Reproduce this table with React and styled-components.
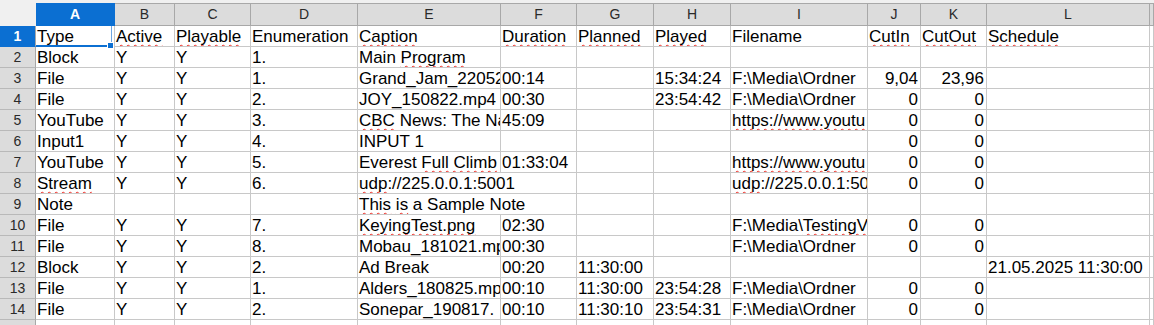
import React from 'react';
import styled, { createGlobalStyle, css } from 'styled-components';

// sheet geometry (px) – row header + columns A..L, then the rest
const COLS = [
  ['A', 79], ['B', 60], ['C', 76], ['D', 107], ['E', 143], ['F', 76],
  ['G', 77], ['H', 77], ['I', 137], ['J', 53], ['K', 66], ['L', 163],
];
const TEMPLATE = `36px ${COLS.map(c => c[1] + 'px').join(' ')} 1fr`;

const BLUE = '#0b6fd2';
const GRID = '#c8c8c8';
const HEAD_BG = '#dcdcdc';
const HEAD_LINE = '#a8a8a8';

const GlobalStyle = createGlobalStyle`
  html, body {
    margin: 0;
    background: #fff;
    overflow: hidden;
  }
`;

const Sheet = styled.div`
  width: 1154px;
  height: 325px;
  overflow: hidden;
  background: #fff;
  font-family: "Liberation Sans", Arial, sans-serif;
`;

const Row = styled.div`
  display: grid;
  grid-template-columns: ${TEMPLATE};
`;

const HeadRow = styled(Row)`
  background: #f0f0f0;
  height: 26px;
`;

const Corner = styled.div`
  background: #f0f0f0;
`;

const ColHead = styled.div`
  margin-top: 3px;
  height: 23px;
  box-sizing: border-box;
  border-top: 1px solid ${HEAD_LINE};
  border-right: 1px solid ${HEAD_LINE};
  border-bottom: 1px solid ${HEAD_LINE};
  background: ${HEAD_BG};
  color: #2a2a2a;
  font-size: 14px;
  line-height: 21px;
  text-align: center;
  ${p => p.$active && css`
    background: ${BLUE};
    border-color: ${BLUE};
    color: #fff;
    font-weight: bold;
  `}
`;

const RowHead = styled.div`
  height: 21px;
  box-sizing: border-box;
  border-right: 1px solid ${HEAD_LINE};
  border-bottom: 1px solid #b9b9b9;
  background: ${HEAD_BG};
  color: #2a2a2a;
  font-size: 14px;
  line-height: 20px;
  text-align: center;
  ${p => p.$active && css`
    background: ${BLUE};
    border-bottom-color: ${BLUE};
    color: #fff;
    font-weight: bold;
  `}
`;

const Cell = styled.div`
  position: relative;
  height: 21px;
  box-sizing: border-box;
  border-right: 1px solid ${GRID};
  border-bottom: 1px solid ${GRID};
  padding: 0 2px 0 1px;
  color: #000;
  font-size: 17px;
  line-height: 21px;
  white-space: nowrap;
  overflow: hidden;
  text-align: ${p => p.$align};
  grid-column: span ${p => p.$span};
  ${p => p.$active && css`
    overflow: visible;
    z-index: 2;
  `}
`;

const Cursor = styled.div`
  position: absolute;
  left: 0;
  top: 0;
  right: 2px;
  bottom: -1px;
  border-right: 1px solid #6ea6e3;
  border-bottom: 2px solid ${BLUE};
  pointer-events: none;
`;

const Handle = styled.div`
  position: absolute;
  right: -3px;
  bottom: -4px;
  width: 5px;
  height: 5px;
  background: ${BLUE};
  border: 1px solid #fff;
`;

// spell-check squiggle
const Spell = styled.span`
  text-decoration: underline wavy #ee2a22;
  text-decoration-thickness: 1.4px;
  text-underline-offset: 2px;
  text-decoration-skip-ink: none;
`;

const S = t => <Spell>{t}</Spell>;
const R = t => ({ t, align: 'right' });
const W = (t, span) => ({ t, span });

const DATA = [
  ['Type', S('Active'), S('Playable'), 'Enumeration', S('Caption'), S('Duration'), S('Planned'), S('Played'), 'Filename', S('CutIn'), S('CutOut'), S('Schedule')],
  ['Block', 'Y', 'Y', '1.', <>Main {S('Program')}</>],
  ['File', 'Y', 'Y', '1.', 'Grand_Jam_220522.mp4', '00:14', '', '15:34:24', 'F:\\Media\\Ordner', R('9,04'), R('23,96')],
  ['File', 'Y', 'Y', '2.', 'JOY_150822.mp4', '00:30', '', '23:54:42', 'F:\\Media\\Ordner', R('0'), R('0')],
  ['YouTube', 'Y', 'Y', '3.', <>{S('CBC')} News: The National</>, '45:09', '', '', S('https://www.youtu'), R('0'), R('0')],
  ['Input1', 'Y', 'Y', '4.', 'INPUT 1', '', '', '', '', R('0'), R('0')],
  ['YouTube', 'Y', 'Y', '5.', <>Everest {S('Full Climb')}</>, '01:33:04', '', '', S('https://www.youtu'), R('0'), R('0')],
  [S('Stream'), 'Y', 'Y', '6.', W(<>{S('udp')}://225.0.0.1:5001</>, 2), '', '', <>{S('udp')}://225.0.0.1:5001</>, R('0'), R('0')],
  ['Note', '', '', '', W(<>{S('This')} {S('is')} a Sample Note</>, 2)],
  ['File', 'Y', 'Y', '7.', S('KeyingTest.png'), '02:30', '', '', <>F:\Media\{S('TestingVideos')}</>, R('0'), R('0')],
  ['File', 'Y', 'Y', '8.', 'Mobau_181021.mp4', '00:30', '', '', 'F:\\Media\\Ordner', R('0'), R('0')],
  ['Block', 'Y', 'Y', '2.', 'Ad Break', '00:20', '11:30:00', '', '', '', '', '21.05.2025 11:30:00'],
  ['File', 'Y', 'Y', '1.', 'Alders_180825.mp4', '00:10', '11:30:00', '23:54:28', 'F:\\Media\\Ordner', R('0'), R('0')],
  ['File', 'Y', 'Y', '2.', 'Sonepar_190817.', '00:10', '11:30:10', '23:54:31', 'F:\\Media\\Ordner', R('0'), R('0')],
  [],
];

const norm = v => {
  if (v && typeof v === 'object' && 't' in v) return { t: v.t, align: v.align || 'left', span: v.span || 1 };
  return { t: v, align: 'left', span: 1 };
};

const SheetRow = ({ num, cells }) => {
  const out = [];
  let col = 0;
  cells.forEach((v, i) => {
    const c = norm(v);
    const active = num === 1 && col === 0;
    out.push(
      <Cell key={i} $align={c.align} $span={c.span} $active={active}>
        {c.t}
        {active && <Cursor><Handle /></Cursor>}
      </Cell>
    );
    col += c.span;
  });
  while (col < COLS.length + 1) {
    out.push(<Cell key={'e' + col} $align="left" $span={1} />);
    col++;
  }
  return (
    <Row>
      <RowHead $active={num === 1}>{num}</RowHead>
      {out}
    </Row>
  );
};

export default function App() {
  return (
    <>
      <GlobalStyle />
      <Sheet>
        <HeadRow>
          <Corner />
          {COLS.map(([k]) => <ColHead key={k} $active={k === 'A'}>{k}</ColHead>)}
          <ColHead />
        </HeadRow>
        {DATA.map((cells, i) => <SheetRow key={i} num={i + 1} cells={cells} />)}
      </Sheet>
    </>
  );
}
